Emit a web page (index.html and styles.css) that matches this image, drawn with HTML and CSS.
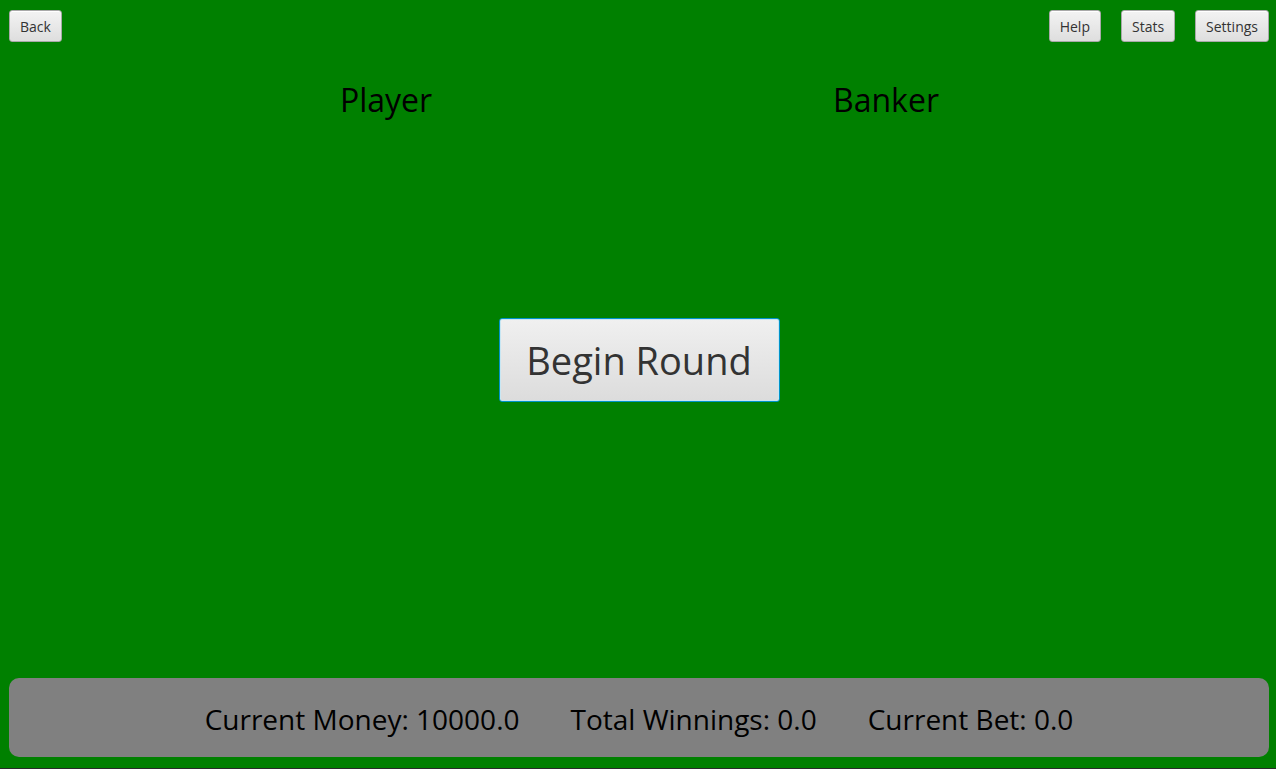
FILE: index.html
```html
<!DOCTYPE html>
<html>
<head>
<meta charset="utf-8">
<link rel="stylesheet" href="styles.css">
</head>
<body>
<div class="app">
  <div class="topbar">
    <button class="btn">Back</button>
    <div class="spacer"></div>
    <button class="btn">Help</button>
    <button class="btn">Stats</button>
    <button class="btn">Settings</button>
  </div>
  <div class="table">
    <div class="labels">
      <div class="side"><span class="side-title">Player</span></div>
      <div class="side"><span class="side-title">Banker</span></div>
    </div>
    <div class="center">
      <button class="begin">Begin Round</button>
    </div>
  </div>
  <div class="status">
    <span class="stat">Current Money: 10000.0</span>
    <span class="stat">Total Winnings: 0.0</span>
    <span class="stat">Current Bet: 0.0</span>
  </div>
  <div class="edge"></div>
</div>
</body>
</html>
```

FILE: styles.css
```css
html, body {
  margin: 0;
  padding: 0;
}
body {
  background: #008000;
  font-family: "Segoe UI", "Open Sans", sans-serif;
  overflow: hidden;
}
.app {
  height: 769px;
  display: flex;
  flex-direction: column;
}
.topbar {
  display: flex;
  align-items: flex-start;
  gap: 20px;
  padding: 10px 7px 0 9px;
  height: 32px;
}
.spacer { flex: 1; }
.btn {
  height: 32px;
  padding: 0 10px;
  font-family: "Segoe UI", "Open Sans", sans-serif;
  font-size: 14px;
  color: #333;
  background: linear-gradient(#f3f3f3, #dedede);
  border: 1px solid #a9a9a9;
  border-radius: 3px;
  box-shadow: inset 0 1px 0 #fff;
}
.table {
  flex: 1;
  display: grid;
}
.labels, .center {
  grid-area: 1 / 1;
}
.labels {
  display: flex;
  justify-content: center;
  padding-right: 4px;
  padding-top: 34px;
  align-self: start;
}
.side {
  width: 500px;
  text-align: center;
}
.side-title {
  font-size: 32px;
  color: #000;
  line-height: 48px;
}
.center {
  display: flex;
  align-items: center;
  justify-content: center;
  padding-left: 2px;
}
.begin {
  width: 281px;
  height: 84px;
  font-family: "Segoe UI", "Open Sans", sans-serif;
  font-size: 38px;
  color: #333;
  background: linear-gradient(#f0f0f0, #dcdcdc);
  border: 1px solid #0093c8;
  border-radius: 3px;
  box-shadow: inset 0 0 0 1px #c8e6f2;
  padding: 0;
}
.status {
  margin: 0 7px 11px 9px;
  height: 79px;
  background: #808080;
  border-radius: 10px;
  display: flex;
  align-items: center;
  justify-content: center;
  gap: 51px;
}
.stat {
  font-size: 28px;
  color: #000;
  padding-top: 3px;
}
.edge {
  height: 1px;
  background: #2a2a2a;
}
```
